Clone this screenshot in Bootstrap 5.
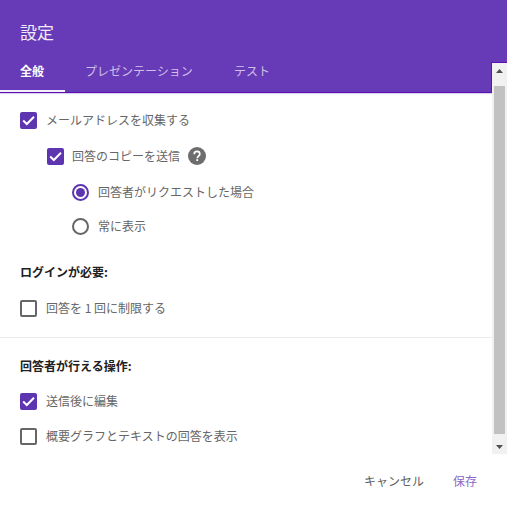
<!DOCTYPE html>
<html lang="ja">
<head>
<meta charset="utf-8">
<title>設定</title>
<link href="https://cdn.jsdelivr.net/npm/bootstrap@5.3.0/dist/css/bootstrap.min.css" rel="stylesheet">
<style>
html,body{margin:0;background:#fff;}
body{font-family:"Noto Sans CJK JP","Noto Sans",sans-serif;font-size:12px;color:#666;overflow:hidden;}
.dlg{width:507px;height:512px;display:flex;flex-direction:column;position:relative;background:#fff;}
.dlg-head{height:93px;flex:none;background:#673ab7;border-bottom:1px solid #5e0fb5;box-shadow:0 1px 1px #d9d2e9;display:flex;flex-direction:column;color:#fff;}
.dlg-title{font-size:17px;line-height:24px;padding:20px 0 0 20px;color:#f1ecf8;}
.tabbar{margin-top:15px;display:flex;height:33px;}
.tabitem{line-height:24px;height:33px;color:#cfc0e8;flex:none;}
.tab-a{width:65px;padding-left:20px;color:#fff;font-weight:700;border-bottom:2px solid #f3f0f9;}
.tab-b{margin-left:20px;width:108px;}
.tab-c{margin-left:41px;}
.dlg-body{flex:none;height:361px;padding-right:15px;}
.optrow{display:flex;align-items:center;height:18px;line-height:18px;white-space:nowrap;}
.box{width:17px;height:17px;flex:none;border-radius:2px;margin-right:9px;border:2px solid #666;background:#fff;display:flex;align-items:center;justify-content:center;}
.box-on{background:#5e35b1;border-color:#5e35b1;}
.rad{width:17px;height:17px;flex:none;border-radius:50%;margin-right:9px;border:2px solid #666;display:flex;align-items:center;justify-content:center;}
.rad-on{border-color:#5e35b1;}
.rad-on::after{content:"";width:9px;height:9px;border-radius:50%;background:#5e35b1;}
.ind0{margin-left:20px;}
.ind1{margin-left:47px;}
.ind1 .box{margin-right:8px;}
.ind2{margin-left:72px;}
.r1{margin-top:18px;}
.r2{margin-top:18px;}
.r3{margin-top:18px;}
.r4{margin-top:16px;}
.hdg{margin:28px 0 0 20px;line-height:18px;height:18px;font-weight:700;color:#212121;}
.r5{margin-top:18px;}
.hr-line{height:1px;background:#ebebeb;margin-top:20px;width:492px;}
.hdg.hdg2{margin-top:19px;}
.r6{margin-top:17px;}
.r7{margin-top:17px;}
.help{width:18px;height:18px;margin-left:8px;flex:none;}
.dlg-foot{flex:1;display:flex;justify-content:flex-end;align-items:flex-start;padding:18px 30px 0 0;line-height:18px;}
.act{color:#616161;}
.act-save{color:#8a68c9;margin-left:29px;}
.sbar{position:absolute;right:0;top:63px;width:15px;height:391px;background:#f1f1f1;display:flex;flex-direction:column;align-items:center;}
.sbar-up,.sbar-dn{width:15px;height:15px;flex:none;display:flex;align-items:center;justify-content:center;}
.sbar-track{flex:1;width:100%;padding:8px 2px 5px 2px;}
.sbar-thumb{display:block;height:100%;background:#c1c1c1;}
.sbar-top{position:absolute;right:0;top:62px;width:16px;height:31px;border-left:1px solid #5e0fb5;border-top:1px solid #5e0fb5;}
</style>
</head>
<body>
<div class="dlg">
  <div class="dlg-head">
    <div class="dlg-title">設定</div>
    <div class="tabbar">
      <div class="tabitem tab-a">全般</div>
      <div class="tabitem tab-b">プレゼンテーション</div>
      <div class="tabitem tab-c">テスト</div>
    </div>
  </div>
  <div class="dlg-body">
    <div class="optrow ind0 r1"><span class="box box-on"><svg width="13" height="13" viewBox="0 0 13 13"><path d="M1.2 6.6l3.6 3.4L12 2.8" fill="none" stroke="#fff" stroke-width="2"/></svg></span>メールアドレスを収集する</div>
    <div class="optrow ind1 r2"><span class="box box-on"><svg width="13" height="13" viewBox="0 0 13 13"><path d="M1.2 6.6l3.6 3.4L12 2.8" fill="none" stroke="#fff" stroke-width="2"/></svg></span>回答のコピーを送信
      <svg class="help" viewBox="0 0 18 18"><circle cx="9" cy="9" r="9" fill="#6d6d6d"/><path d="M6.2 7.2C6.2 5.5 7.5 4.4 9 4.4s2.8 1 2.8 2.6c0 2-2.5 2.2-2.5 4.2" fill="none" stroke="#fff" stroke-width="1.7"/><rect x="8.3" y="12.2" width="1.8" height="1.8" fill="#fff"/></svg>
    </div>
    <div class="optrow ind2 r3"><span class="rad rad-on"></span>回答者がリクエストした場合</div>
    <div class="optrow ind2 r4"><span class="rad"></span>常に表示</div>
    <div class="hdg">ログインが必要:</div>
    <div class="optrow ind0 r5"><span class="box"></span>回答を 1 回に制限する</div>
    <div class="hr-line"></div>
    <div class="hdg hdg2">回答者が行える操作:</div>
    <div class="optrow ind0 r6"><span class="box box-on"><svg width="13" height="13" viewBox="0 0 13 13"><path d="M1.2 6.6l3.6 3.4L12 2.8" fill="none" stroke="#fff" stroke-width="2"/></svg></span>送信後に編集</div>
    <div class="optrow ind0 r7"><span class="box"></span>概要グラフとテキストの回答を表示</div>
  </div>
  <div class="dlg-foot">
    <span class="act">キャンセル</span>
    <span class="act-save">保存</span>
  </div>
  <div class="sbar-top"></div>
  <div class="sbar">
    <div class="sbar-up"><svg width="7" height="4" viewBox="0 0 7 4"><path d="M3.5 0L7 4H0z" fill="#505050"/></svg></div>
    <div class="sbar-track"><span class="sbar-thumb"></span></div>
    <div class="sbar-dn"><svg width="7" height="4" viewBox="0 0 7 4"><path d="M0 0h7L3.5 4z" fill="#505050"/></svg></div>
  </div>
</div>
<script src="https://cdn.jsdelivr.net/npm/bootstrap@5.3.0/dist/js/bootstrap.bundle.min.js"></script>
</body>
</html>
